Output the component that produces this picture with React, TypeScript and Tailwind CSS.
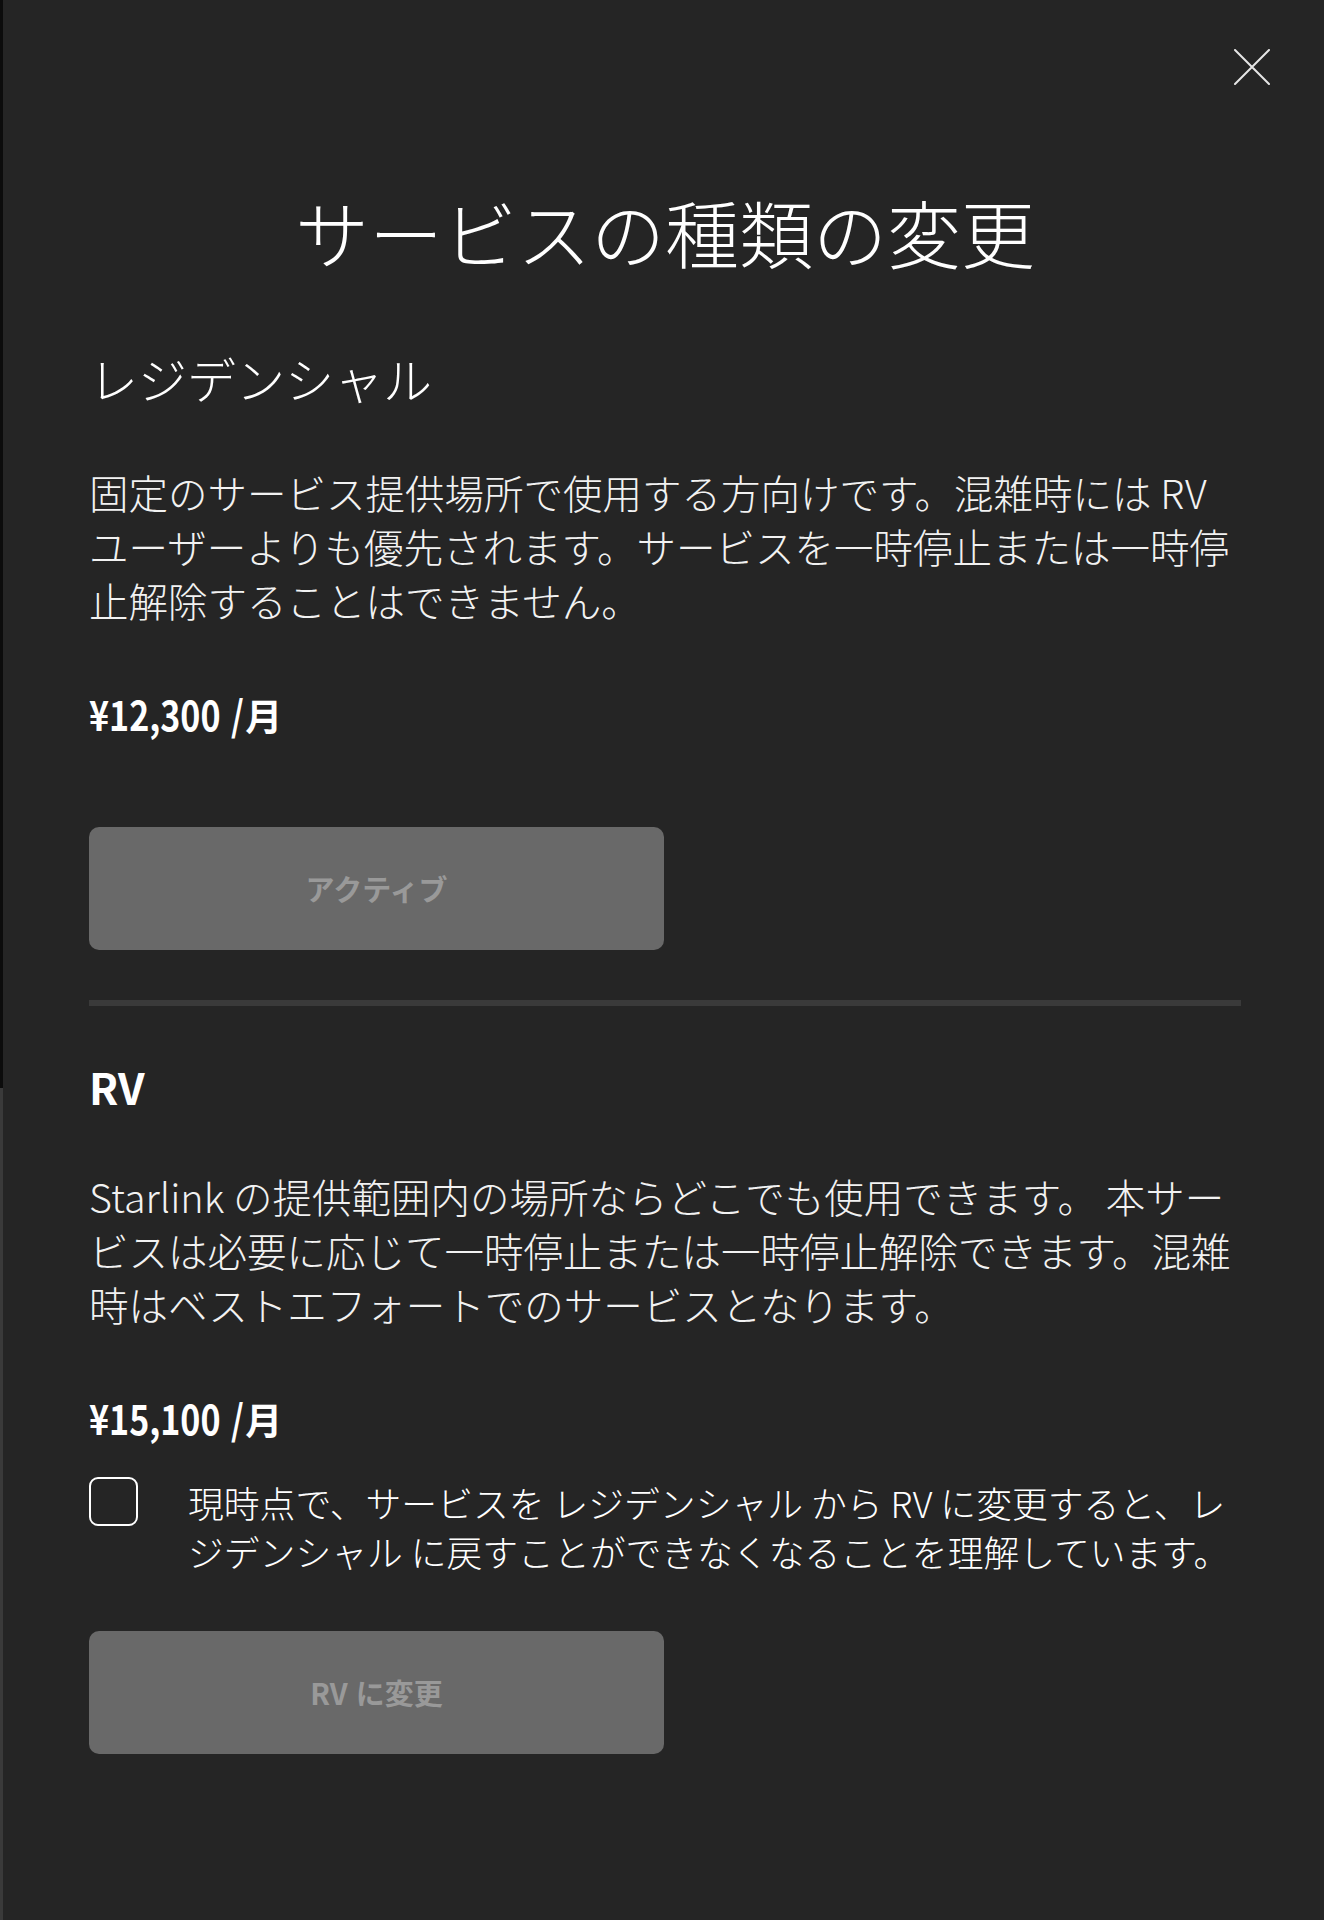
import React from "react";

const JP = { fontFamily: '"Noto Sans CJK JP", sans-serif' };

const CloseIcon: React.FC = () => (
  <svg width="36" height="36" viewBox="0 0 36 36" fill="none">
    <path d="M1 1L35 35M35 1L1 35" stroke="#e6e6e6" strokeWidth="2" strokeLinecap="round" />
  </svg>
);

const Lines: React.FC<{ lines: string[]; className: string }> = ({ lines, className }) => (
  <p className={className} style={JP}>
    {lines.map((l, i) => (
      <span key={i} className="block whitespace-nowrap">{l}</span>
    ))}
  </p>
);

// condensed-looking price, the number squeezed horizontally
const Price: React.FC<{ amount: string }> = ({ amount }) => (
  <p className="flex items-baseline text-[41px] leading-[48px] font-bold text-white" style={JP}>
    <span className="inline-block origin-left scale-x-[0.83] -mr-[28px]">{amount}</span>
    <span className="ml-[12px] inline-block origin-left scale-x-[0.8]">/</span>
    <span className="-ml-[2px] text-[37px]">月</span>
  </p>
);

const GrayButton: React.FC<{ children: React.ReactNode }> = ({ children }) => (
  <button
    disabled
    className="w-[575px] h-[123px] rounded-[10px] bg-[#696969] text-[#999999] text-[29px] font-bold flex items-center justify-center"
    style={JP}
  >
    {children}
  </button>
);

export default function App() {
  return (
    <div className="flex min-h-[1920px] w-[1324px] bg-[#252525]">
      {/* sliver of the layer behind the sheet */}
      <div className="flex w-[3px] flex-col">
        <div className="h-[1088px] bg-[#0c0c0c]" />
        <div className="flex-1 bg-[#3a3a3a]" />
      </div>

      <div className="flex-1 pl-[86px] pr-[83px] pt-[49px]">
        <div className="flex justify-end -mr-[29px]">
          <CloseIcon />
        </div>

        <h1 className="mt-[102px] text-center text-[74px] leading-[88px] font-light text-white" style={JP}>
          サービスの種類の変更
        </h1>

        <h2 className="mt-[73px] text-[49px] leading-[60px] font-light text-white" style={JP}>
          レジデンシャル
        </h2>

        <Lines
          className="mt-[57px] text-[39.5px] leading-[54px] font-light text-[#f2f2f2]"
          lines={[
            "固定のサービス提供場所で使用する方向けです。混雑時には RV",
            "ユーザーよりも優先されます。サービスを一時停止または一時停",
            "止解除することはできません。",
          ]}
        />

        <div className="mt-[62px]">
          <Price amount="¥12,300" />
        </div>

        <div className="mt-[88px]">
          <GrayButton>アクティブ</GrayButton>
        </div>

        <div className="mt-[50px] h-[6px] bg-[#3a3a3a]" />

        <h2 className="mt-[54px] text-[43px] leading-[52px] font-bold text-white" style={JP}>
          RV
        </h2>

        <Lines
          className="mt-[57px] text-[39.5px] leading-[54px] font-light text-[#f2f2f2]"
          lines={[
            "Starlink の提供範囲内の場所ならどこでも使用できます。 本サー",
            "ビスは必要に応じて一時停止または一時停止解除できます。混雑",
            "時はベストエフォートでのサービスとなります。",
          ]}
        />

        <div className="mt-[62px]">
          <Price amount="¥15,100" />
        </div>

        <label className="mt-[34px] flex items-start gap-[50px]">
          <span className="h-[49px] w-[49px] shrink-0 rounded-[9px] border-2 border-white" />
          <Lines
            className="mt-px text-[35.8px] leading-[49px] font-light text-white"
            lines={[
              "現時点で、サービスを レジデンシャル から RV に変更すると、レ",
              "ジデンシャル に戻すことができなくなることを理解しています。",
            ]}
          />
        </label>

        <div className="mt-[55px]">
          <GrayButton>
            <span>RV</span>
            <span className="ml-[8px]">に変更</span>
          </GrayButton>
        </div>
      </div>
    </div>
  );
}
